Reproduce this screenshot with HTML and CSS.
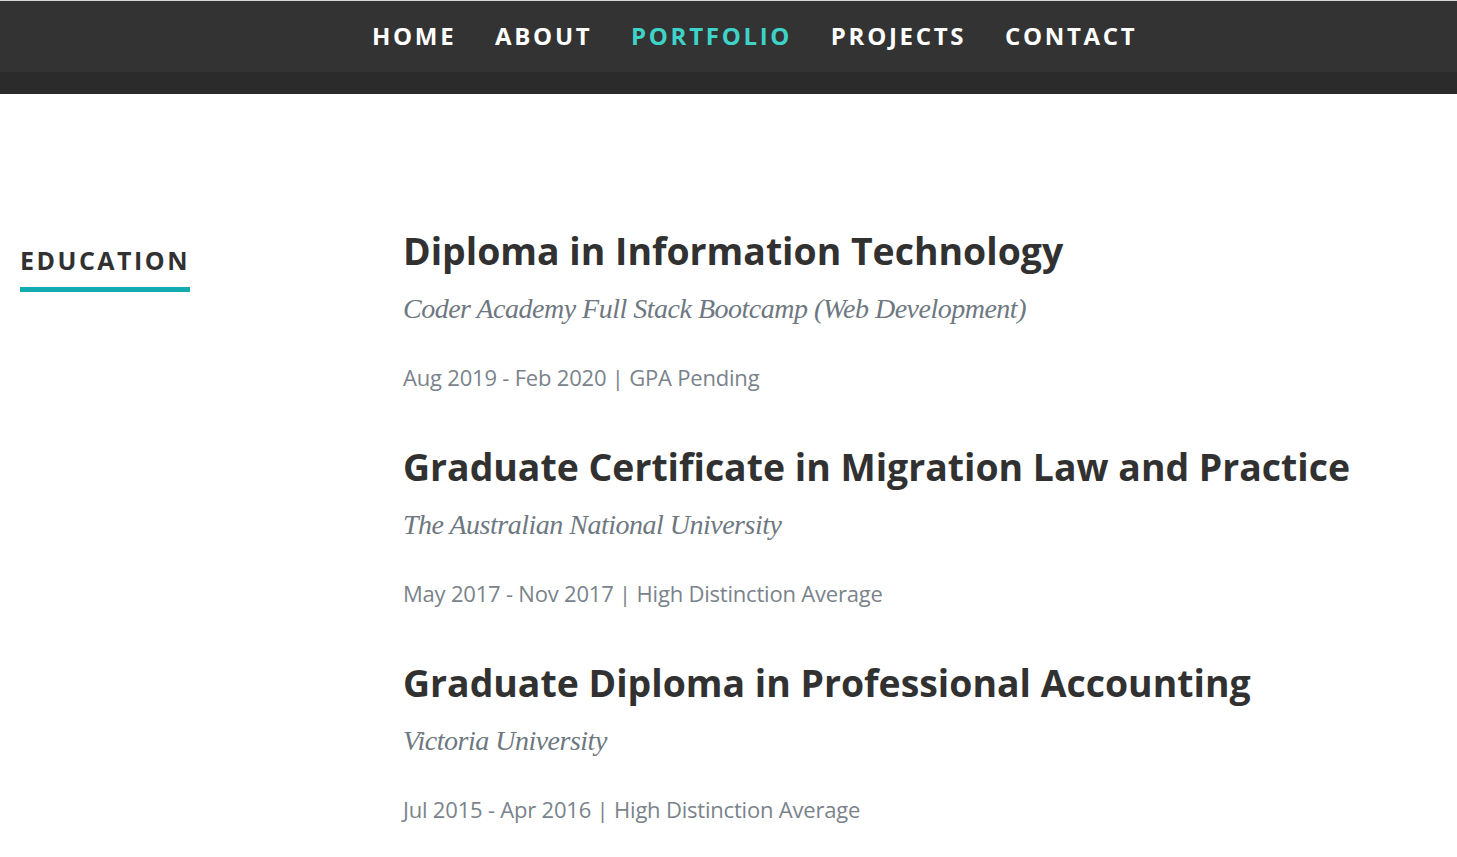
FILE: index.html
```html
<!DOCTYPE html>
<html lang="en">
<head>
<meta charset="utf-8">
<title>Portfolio - Education</title>
<link rel="stylesheet" href="styles.css">
</head>
<body>
<header class="top">
  <nav class="nav">
    <ul class="nav-list">
      <li><a class="nav-link" href="#">Home</a></li>
      <li><a class="nav-link" href="#">About</a></li>
      <li><a class="nav-link current" href="#">Portfolio</a></li>
      <li><a class="nav-link" href="#">Projects</a></li>
      <li><a class="nav-link" href="#">Contact</a></li>
    </ul>
  </nav>
  <div class="band"></div>
</header>
<section class="resume">
  <div class="side">
    <h1 class="section-title">Education</h1>
  </div>
  <div class="entries">
    <div class="entry">
      <h3 class="degree">Diploma in Information Technology</h3>
      <p class="info">Coder Academy Full Stack Bootcamp (Web Development)</p>
      <p class="date">Aug 2019 - Feb 2020 | GPA Pending</p>
    </div>
    <div class="entry">
      <h3 class="degree">Graduate Certificate in Migration Law and Practice</h3>
      <p class="info">The Australian National University</p>
      <p class="date">May 2017 - Nov 2017 | High Distinction Average</p>
    </div>
    <div class="entry">
      <h3 class="degree">Graduate Diploma in Professional Accounting</h3>
      <p class="info">Victoria University</p>
      <p class="date">Jul 2015 - Apr 2016 | High Distinction Average</p>
    </div>
  </div>
</section>
</body>
</html>
```
FILE: styles.css
```css
* { box-sizing: border-box; }
html, body { margin: 0; padding: 0; background: #fff; }
body { font-family: "Open Sans", "Liberation Sans", sans-serif; color: #313131; }

.top { border-top: 1px solid #d6d6d6; }
.nav { background: #333333; height: 71px; }
.nav-list {
  list-style: none; margin: 0; padding: 0 0 0 372px;
  display: flex; gap: 38.7px; height: 71px; align-items: center;
}
.nav-link {
  display: block; color: #fff; text-decoration: none; text-transform: uppercase;
  font-weight: 700; font-size: 24px; letter-spacing: 2.7px; line-height: 71px;
  padding-bottom: 2px;
}
.nav-link.current { color: #3fd3c8; }
.band { height: 22px; background: #2b2b2b; }

.resume {
  display: grid; grid-template-columns: 383px 1fr;
  padding: 135px 0 0 20px;
}
.section-title {
  display: inline-block; margin: 0;
  font-size: 25px; font-weight: 700; letter-spacing: 2.5px; line-height: 36px;
  text-transform: uppercase; color: #313131;
  padding-top: 13px; padding-bottom: 9px; border-bottom: 5px solid #11abb0;
}
.entries { display: flex; flex-direction: column; }
.entry { height: 216px; }
.degree { margin: 0; font-size: 37.4px; font-weight: 700; line-height: 44px; color: #313131; }
.info {
  margin: 19px 0 0; font-family: "Liberation Serif", "Times New Roman", serif;
  font-style: italic; font-size: 28px; letter-spacing: -0.5px; line-height: 34px; color: #6e7881;
}
.date { margin: 36px 0 0; font-size: 22px; letter-spacing: -0.2px; line-height: 30px; color: #7a838b; }
```
